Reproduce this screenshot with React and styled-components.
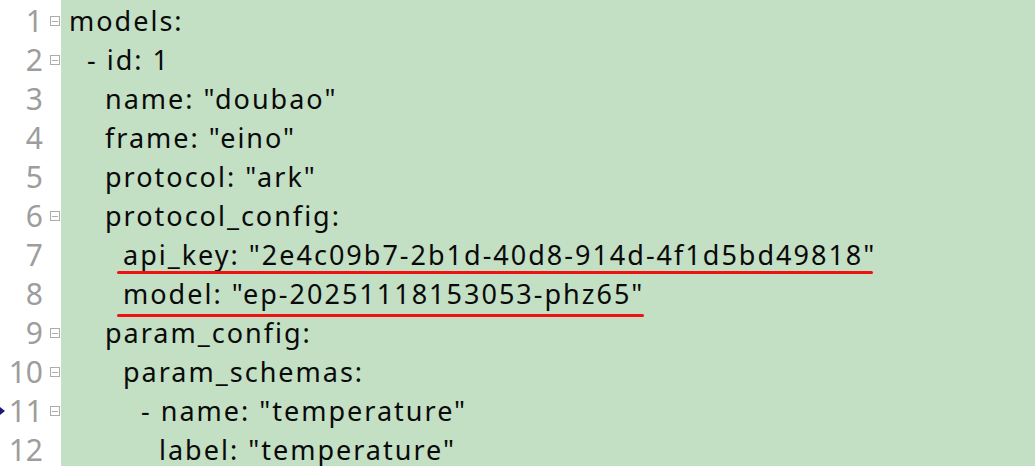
import React from "react";
import styled, { createGlobalStyle } from "styled-components";

const GlobalStyle = createGlobalStyle`
  html, body {
    margin: 0;
    padding: 0;
    background: #ffffff;
    overflow: hidden;
  }
`;

const lines = [
  { text: "models:", level: 0, fold: true },
  { text: "- id: 1", level: 1, fold: true },
  { text: 'name: "doubao"', level: 2 },
  { text: 'frame: "eino"', level: 2 },
  { text: 'protocol: "ark"', level: 2 },
  { text: "protocol_config:", level: 2, fold: true },
  { text: 'api_key: "2e4c09b7-2b1d-40d8-914d-4f1d5bd49818"', level: 3, mark: { drop: 1, tail: 3 } },
  { text: 'model: "ep-20251118153053-phz65"', level: 3, mark: { drop: 5, tail: 0 } },
  { text: "param_config:", level: 2, fold: true },
  { text: "param_schemas:", level: 3, fold: true },
  { text: '- name: "temperature"', level: 4, fold: true, arrow: true },
  { text: 'label: "temperature"', level: 5 },
];

const Editor = styled.div`
  display: flex;
  flex-direction: column;
  width: 1035px;
  height: 466px;
  overflow: hidden;
  font-family: "Noto Sans", "Open Sans", sans-serif;
`;

const Row = styled.div`
  display: grid;
  grid-template-columns: 61px 1fr;
  height: 39px;
  flex-shrink: 0;
`;

const Gutter = styled.div`
  position: relative;
  display: flex;
  align-items: flex-start;
  background: #ffffff;
`;

const Number = styled.span`
  width: 43px;
  text-align: right;
  font-size: 30px;
  line-height: 39px;
  padding-top: 1px;
  color: #9d9d9d;
`;

const Fold = styled.span`
  box-sizing: border-box;
  width: 10px;
  height: 10px;
  margin: 16px 0 0 7px;
  border: 1px solid #acacac;
  display: flex;
  align-items: center;
  justify-content: center;
  &::before {
    content: "";
    width: 6px;
    height: 1px;
    background: #acacac;
  }
`;

const Arrow = styled.span`
  position: absolute;
  left: 0;
  top: 17px;
  width: 0;
  height: 0;
  border-top: 4px solid transparent;
  border-bottom: 4px solid transparent;
  border-left: 5px solid #1a1a80;
`;

const Code = styled.div`
  background: #c3dfc4;
  padding-left: ${(p) => 8 + p.$level * 18}px;
  padding-top: 2px;
  font-size: 27px;
  line-height: 37px;
  letter-spacing: 2px;
  color: #0a0a0a;
  white-space: pre;
`;

const Mark = styled.span`
  position: relative;
  &::after {
    content: "";
    position: absolute;
    left: -6px;
    right: ${(p) => p.$tail}px;
    bottom: ${(p) => -p.$drop}px;
    height: 3px;
    border-radius: 2px;
    background: #f01212;
  }
`;

export default function App() {
  return (
    <>
      <GlobalStyle />
      <Editor>
        {lines.map((line, i) => (
          <Row key={i}>
            <Gutter>
              {line.arrow && <Arrow />}
              <Number>{i + 1}</Number>
              {line.fold && <Fold />}
            </Gutter>
            <Code $level={line.level}>
              {line.mark ? (
                <Mark $drop={line.mark.drop} $tail={line.mark.tail}>
                  {line.text}
                </Mark>
              ) : (
                line.text
              )}
            </Code>
          </Row>
        ))}
      </Editor>
    </>
  );
}
